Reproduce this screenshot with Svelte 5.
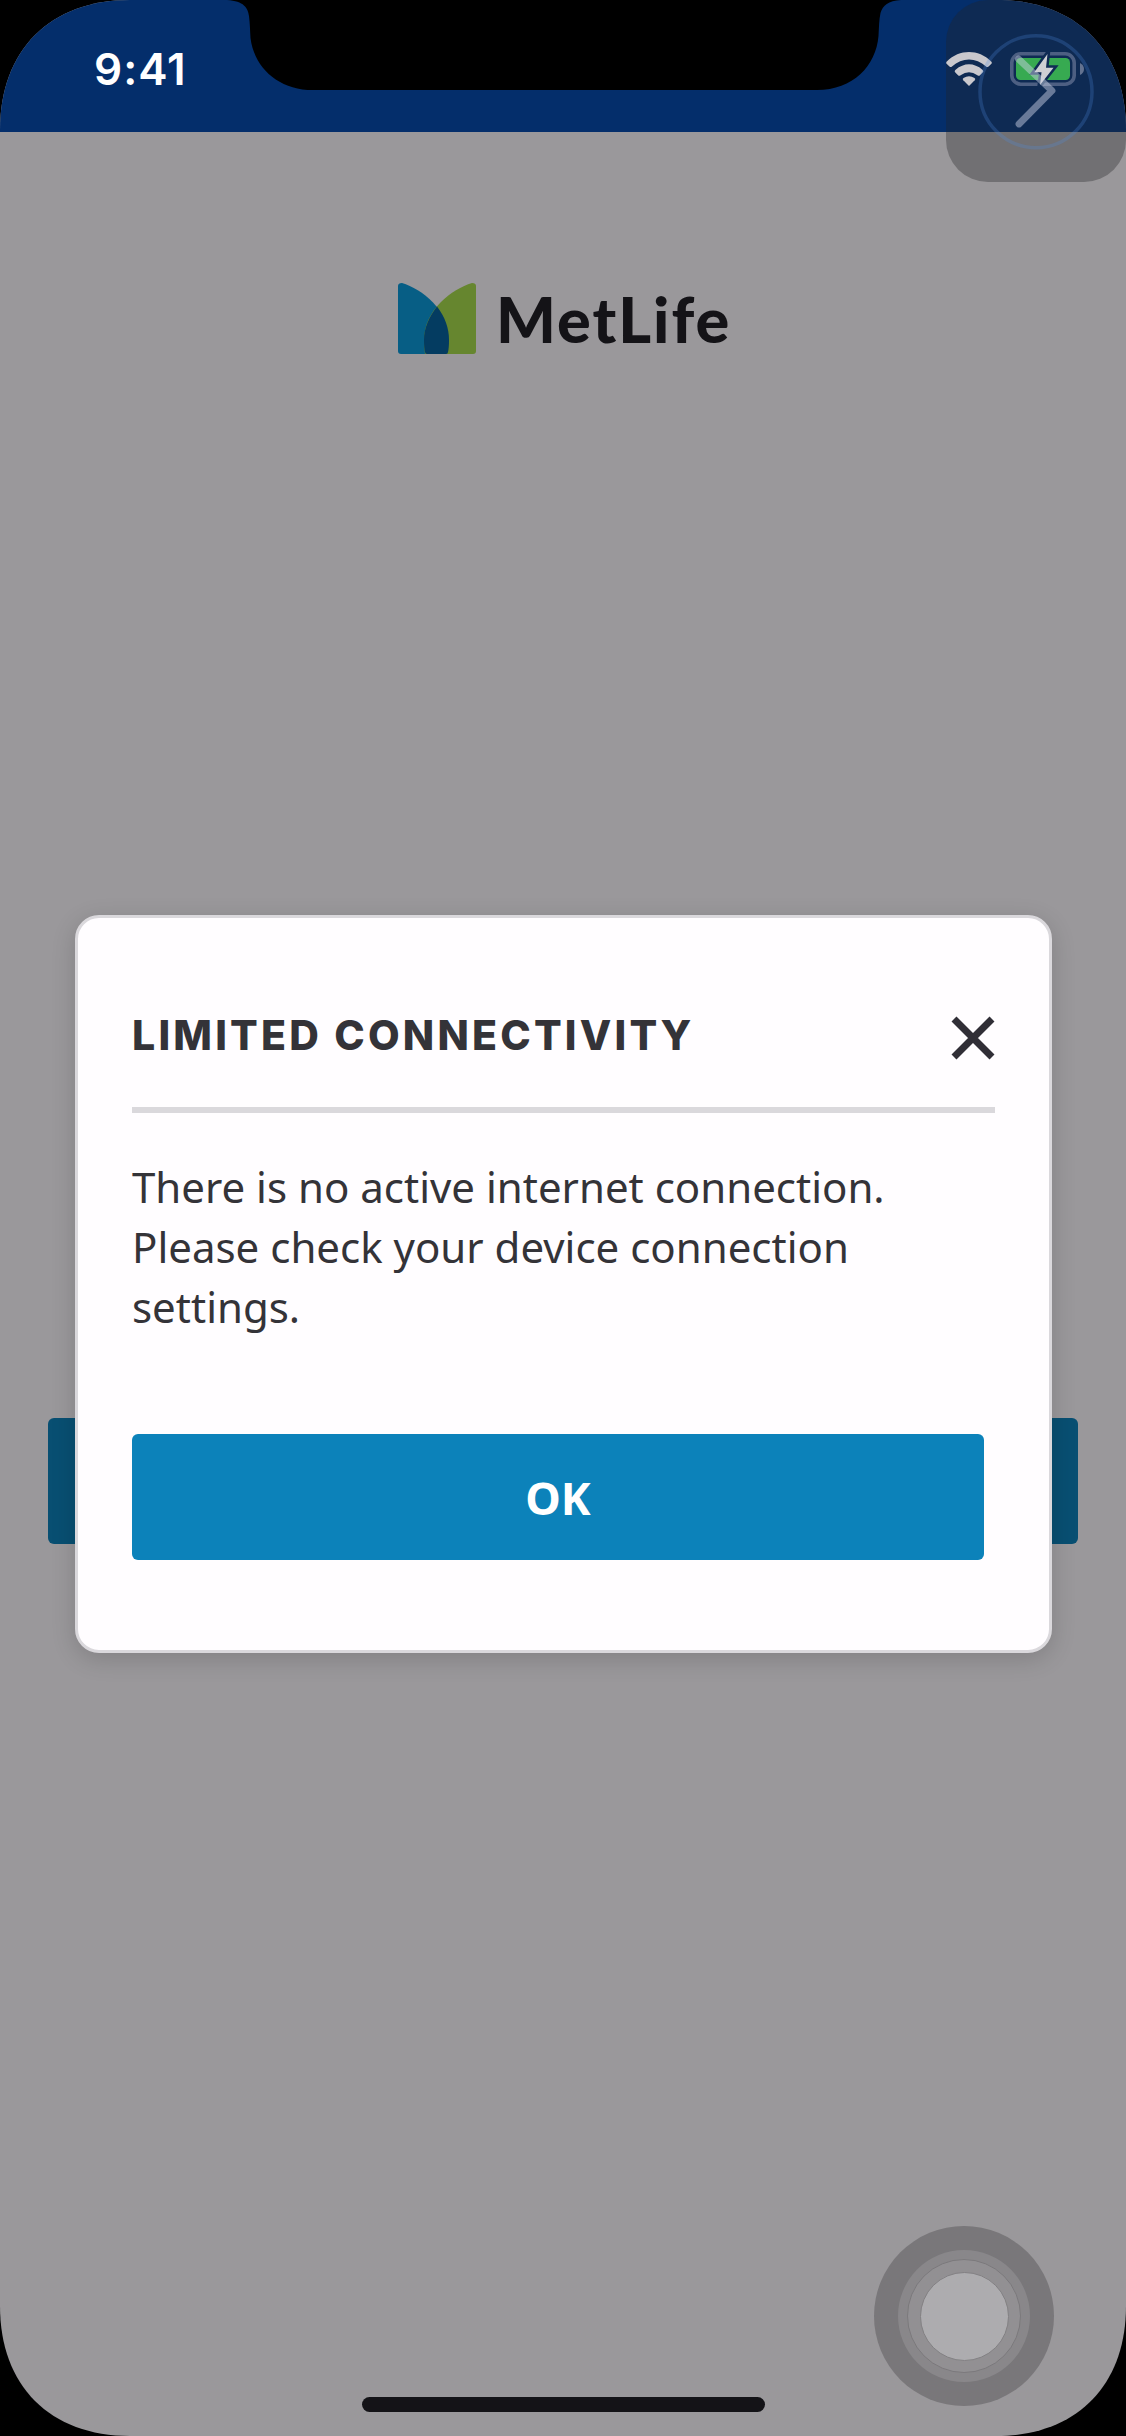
<script>
  let open = $state(true);
  const close = () => (open = false);
</script>

<div class="phone">
  <header>
    <time>9:41</time>
    <svg class="notch" viewBox="0 0 674 90" aria-hidden="true">
      <path d="M0 0C17 1 21 8 22 16C23 24 23 30 23.500 38C27 67 51 90 86 90H590C626 90 649 66 651.500 36C652 27 652 20 653.500 13C656 5 661 1 674 0Z" />
    </svg>
    <div class="status">
      <svg class="wifi" viewBox="0 0 46 34" aria-hidden="true">
        <path d="M23 34 17.300 28.300Q16 27 17.500 26Q23 22.500 28.500 26Q30 27 28.700 28.300Z" />
        <path d="M9.300 20.600Q7.900 19.200 9.300 17.900Q23 6.800 36.700 17.900Q38.100 19.200 36.700 20.600L34 23.300Q32.800 24.400 31.400 23.300Q23 17.400 14.600 23.300Q13.200 24.400 12 23.300Z" />
        <path d="M.8 12Q-.4 10.700 .8 9.500C13.500-3.100 32.500-3.100 45.200 9.500Q46.400 10.700 45.200 12L42.500 14.500Q41.300 15.500 40 14.500C30 5.200 16 5.200 6 14.500Q4.700 15.500 3.500 14.500Z" />
      </svg>
      <svg class="battery" viewBox="0 0 74 36" aria-hidden="true">
        <rect class="shell" x="1.800" y="2.800" width="62.400" height="30.400" rx="9" />
        <rect class="charge" x="6" y="7" width="54" height="22" rx="4.500" />
        <path class="cap" d="M70 12Q74 14 74 18T70 24Z" />
        <path class="bolt" d="M37.500 3 24.300 21.300H31.500L30 34 43.500 16.700H36Z" />
      </svg>
    </div>
  </header>

  <main>
    <div class="brand">
      <svg viewBox="0 0 78 71" aria-hidden="true">
        <path fill="#075e85" d="M4 0C24 6 51 27 51 57Q51 65 50 71H3Q0 71 0 68V3Q0 0 4 0Z" />
        <path fill="#66862f" d="M74 0C54 6 26 27 26 57Q26 65 27 71H75Q78 71 78 68V3Q78 0 74 0Z" />
        <path fill="#043c61" d="M39 23.500C47 34 51 45 51 57Q51 65 50 69Q50 71 48 71H29Q27 71 27 69Q26 65 26 57C26 45 31 34 39 23.500Z" />
      </svg>
      <span>MetLife</span>
    </div>
    <div class="login"></div>
    <div class="home"></div>
  </main>

  {#if open}
    <div class="dialog" role="dialog" aria-labelledby="title">
      <div class="heading">
        <h1 id="title">LIMITED CONNECTIVITY</h1>
        <button class="close" aria-label="Close" onclick={close}>
          <svg viewBox="0 0 44 44"><path d="M3 3 41 41M41 3 3 41" /></svg>
        </button>
      </div>
      <p>There is no active internet connection.<br />Please check your device connection<br />settings.</p>
      <button class="ok" onclick={close}>OK</button>
    </div>
  {/if}

  <div class="shortcut"></div>
  <svg class="arrow" viewBox="0 0 180 182" aria-hidden="true">
    <circle cx="90" cy="91.700" r="56" />
    <path d="M72.500 59 106 90.700 73 124" />
  </svg>

  <div class="touch"><div class="ring"><div class="inner"><div class="core"></div></div></div></div>
</div>

<style>
  :global(body) { background: #000; }
  .phone {
    position: relative;
    display: flex;
    flex-direction: column;
    width: 1126px;
    height: 2436px;
    background: #9a989b;
    color: #343338;
    font-family: "Noto Sans", sans-serif;
    clip-path: path("M0 130C0 50 50 0 130 0H996C1076 0 1126 50 1126 130V2306C1126 2386 1076 2436 996 2436H130C50 2436 0 2386 0 2306Z");
  }
  header {
    display: grid;
    grid-template-columns: 227px 674px 1fr;
    height: 132px;
    background: #042e6b;
  }
  time {
    padding: 42px 0 0 94px;
    font: 600 44px/54px Inter, sans-serif;
    letter-spacing: 1px;
    color: #fff;
  }
  .notch { width: 674px; height: 90px; }
  .status {
    position: relative;
    z-index: 2;
    display: flex;
    gap: 18px;
    padding: 51px 0 0 45px;
  }
  .wifi { width: 46px; height: 34px; margin-top: 1px; fill: #c9c8cd; }
  .battery { width: 74px; height: 36px; }
  .shell { fill: none; stroke: #4d5f82; stroke-width: 3.6; }
  .charge { fill: #37aa51; }
  .cap { fill: #637290; }
  .bolt { fill: #cfcfd4; stroke: #0f2b54; stroke-width: 5; paint-order: stroke; }

  main { display: flex; flex-direction: column; flex: 1; align-items: center; }
  .brand {
    display: flex;
    align-items: flex-start;
    width: 330px;
    margin-top: 151px;
  }
  .brand svg { flex: none; width: 78px; height: 71px; }
  .brand span {
    margin: -2px 0 0 20px;
    font: 900 63px/76px Lato, sans-serif;
    letter-spacing: 2px;
    color: #141317;
  }
  .login {
    width: 1030px;
    height: 126px;
    margin: 1061px 0 auto;
    border-radius: 6px;
    background: #084f72;
  }
  .home {
    width: 403px;
    height: 15px;
    margin-bottom: 24px;
    border-radius: 8px;
    background: #141317;
  }

  .dialog {
    position: absolute;
    top: 915px;
    left: 75px;
    box-sizing: border-box;
    width: 977px;
    height: 738px;
    padding: 84px 54px 0;
    border: 3px solid #dad8dc;
    border-radius: 24px;
    background: #fffdff;
    box-shadow: 0 6px 24px rgba(0, 0, 0, .16);
  }
  .heading {
    display: flex;
    justify-content: space-between;
    height: 105px;
    border-bottom: 6px solid #dad8dc;
  }
  h1 {
    margin: 8px 0 0;
    font: 800 41px/50px Inter, sans-serif;
    letter-spacing: 3.2px;
    white-space: nowrap;
  }
  button { border: 0; padding: 0; }
  .close { width: 44px; height: 44px; margin-top: 14px; background: none; }
  .close svg { display: block; fill: none; stroke: #302e36; stroke-width: 7; }
  p { margin: 44px 0 0; font-size: 42px; line-height: 60px; white-space: nowrap; }
  .ok {
    display: block;
    width: 852px;
    height: 126px;
    margin-top: 97px;
    padding-top: 2px;
    border-radius: 6px;
    background: #0c82ba;
    color: #fff;
    font: 700 45px/60px "Noto Sans", sans-serif;
  }

  .shortcut {
    position: absolute;
    top: 0;
    right: 0;
    width: 180px;
    height: 182px;
    border-radius: 42px;
    background: rgba(36, 36, 38, .34);
  }
  .arrow {
    position: absolute;
    z-index: 3;
    top: 0;
    right: 0;
    width: 180px;
    height: 182px;
    fill: none;
  }
  .arrow circle { stroke: rgba(80, 140, 225, .25); stroke-width: 3.5; }
  .arrow path { stroke: rgba(205, 212, 230, .48); stroke-width: 6.8; stroke-linecap: round; stroke-linejoin: round; }

  .touch {
    position: absolute;
    top: 2226px;
    left: 874px;
    display: grid;
    place-items: center;
    width: 180px;
    height: 180px;
    border-radius: 50%;
    background: #79777a;
  }
  .ring, .inner, .core { display: grid; place-items: center; box-sizing: border-box; border-radius: 50%; }
  .ring { width: 132px; height: 132px; background: #89878a; }
  .inner { width: 114px; height: 114px; border: 1px solid #7b797c; background: #929093; }
  .core { width: 89px; height: 89px; border: 1px solid #828083; background: #adacaf; }
</style>
